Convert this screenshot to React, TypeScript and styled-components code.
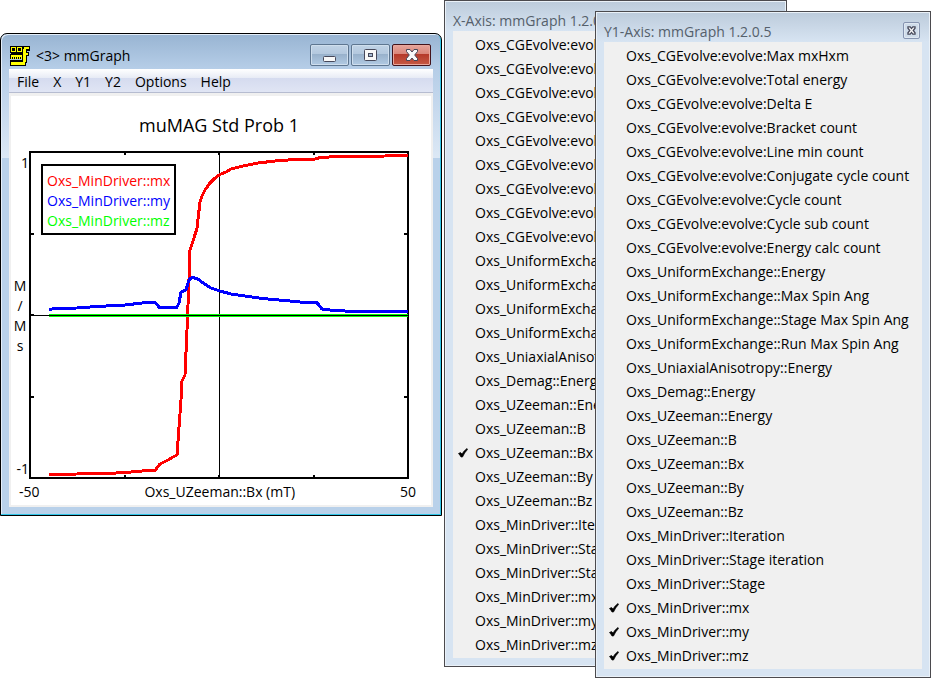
import React from "react";
import styled, { createGlobalStyle } from "styled-components";

const GlobalStyle = createGlobalStyle`
  * { box-sizing: border-box; }
  body {
    margin: 0;
    background: #ffffff;
    color: #000000;
    font: 14px/20px "Open Sans", "Noto Sans", sans-serif;
  }
  button { font: inherit; color: inherit; }
`;

const Desktop = styled.main`
  position: relative;
  min-height: 100vh;
  overflow: hidden;
`;

/* ---------- Graph window ---------- */

const GraphWindow = styled.section`
  position: absolute;
  left: 0;
  top: 33px;
  width: min(442px, 100vw);
  padding: 2px 8px 8px;
  border: 1px solid #000000;
  border-radius: 7px 7px 0 0;
  background:
    linear-gradient(#98b4d2 0, #b5cde7 34px, #dce8f5 124px) 0 0 / 100% 124px no-repeat,
    #b9d1ea;
  box-shadow: inset -1px -1px 0 #2fc6e8, inset 1px 1px 0 #e4eef9;
`;

const GraphTitleBar = styled.header`
  display: flex;
  align-items: center;
  height: 33px;
  gap: 5px;
  padding: 0 2px 0 1px;
`;

const TitleIcon = styled.svg`
  flex: none;
  align-self: flex-end;
  margin-bottom: 2px;
`;

const GraphTitle = styled.h1`
  flex: 1;
  margin: 0;
  padding-top: 6px;
  font-size: 14px;
  font-weight: 400;
`;

const CaptionButtons = styled.div`
  display: flex;
  align-self: flex-end;
  gap: 2px;
  padding-bottom: 3px;
`;

const CaptionButton = styled.button<{ $danger?: boolean }>`
  display: grid;
  place-items: center;
  width: 39px;
  height: 22px;
  padding: 0;
  border: 1px solid ${(p) => (p.$danger ? "#43141c" : "#5e7690")};
  border-radius: 2px;
  background: ${(p) =>
    p.$danger
      ? "linear-gradient(#e7a59c 0, #d98579 45%, #b5392a 46%, #c65a45 100%)"
      : "linear-gradient(#c1d3e6 0, #b3c8de 45%, #98b1cb 46%, #b1cae3 100%)"};
  box-shadow: inset 0 0 0 1px ${(p) => (p.$danger ? "#e9a79c" : "#cfdeed")};
`;

const MenuBar = styled.nav`
  display: flex;
  height: 24px;
  padding-left: 1px;
  border-bottom: 1px solid #b6bcd0;
  background: linear-gradient(#ffffff 0, #e7ebf5 9px, #d5dbef 9px, #e0e5f4 100%);
`;

const MenuButton = styled.button`
  padding: 3px 7px 0;
  border: 0;
  background: none;
`;

const Client = styled.div`
  border: 2px solid #f0f0f0;
  border-top-width: 3px;
  background: #ffffff;
`;

const ChartGrid = styled.figure`
  display: grid;
  grid-template-columns: 18px 1fr 22px;
  grid-template-rows: 55px auto 26px;
  margin: 0;
`;

const ChartTitle = styled.figcaption`
  grid-column: 2;
  padding-top: 17px;
  font-size: 18px;
  line-height: 24px;
  text-align: center;
`;

const YAxis = styled.div`
  grid-column: 1;
  display: flex;
  flex-direction: column;
  justify-content: space-between;
  padding-top: 2px;
  text-align: right;
`;

const YTitle = styled.div`
  display: flex;
  flex-direction: column;
  align-items: center;
`;

const PlotArea = styled.div`
  position: relative;
`;

const Plot = styled.svg`
  display: block;
  width: 100%;
  height: auto;
`;

const Legend = styled.ul`
  position: absolute;
  left: 12px;
  top: 13px;
  margin: 0;
  padding: 5px 4px 2px;
  border: 2px solid #000000;
  background: #ffffff;
  list-style: none;
`;

const LegendItem = styled.li<{ $color: string }>`
  color: ${(p) => p.$color};
`;

const XAxis = styled.div`
  grid-column: 1 / -1;
  display: flex;
  justify-content: space-between;
  padding: 3px 15px 0 8px;
`;

const RED = "#ff0000";
const BLUE = "#0000ff";
const GREEN = "#00ff00";

const series = [
  {
    name: "Oxs_MinDriver::mx",
    color: RED,
    points:
      "49,474.5 77,474 108,473.5 125,472.5 142,471 155,470.5 160,464 168,460 173,457 177,455 181,400 181.5,382 185,375 187,330 189,280 190,250 194,238 197,228 200,202 202,196 205,190 210,183 215,178 220,174.5 226,172 231,169 243,166 258,163 275,161 295,159.5 315,159 320,157.5 338,156.5 385,156 408,155.5",
  },
  {
    name: "Oxs_MinDriver::my",
    color: BLUE,
    points:
      "49,309.5 55,308.5 77,308 97,306.5 125,305 142,303 155,302.5 159,307 177,307 179,303 181,292 186,290 188,283 190,278.5 193,277.5 198,279 203,283 211,288 220,291 231,294 245,296 262,298.5 285,300.5 300,302 316,302 319,305 322,309 330,310 345,311 357,311.5 408,312",
  },
  { name: "Oxs_MinDriver::mz", color: GREEN, points: "49,315.5 408,315.5" },
];

const xTicks = [125, 219, 314];
const yTicks = [234, 315, 397];

function PlotDrawing() {
  return (
    <Plot viewBox="29 151 380 328" role="img" aria-label="M/Ms against Oxs_UZeeman::Bx">
      <g shapeRendering="crispEdges" stroke="#000000" fill="none">
        <rect x="30" y="152" width="378" height="326" strokeWidth="2" />
        {xTicks.map((x) => (
          <path key={x} d={`M${x} 153v2M${x} 477v-2`} strokeWidth="2" />
        ))}
        {yTicks.map((y) => (
          <path key={y} d={`M31 ${y}h3M407 ${y}h-3`} strokeWidth="2" />
        ))}
        <path d="M219.5 152V478" />
      </g>
      <g fill="none" strokeWidth="3" shapeRendering="crispEdges">
        {series.map((s) => (
          <polyline key={s.name} points={s.points} stroke={s.color} />
        ))}
      </g>
      <path d="M30 315.5H408" stroke="#000000" shapeRendering="crispEdges" />
    </Plot>
  );
}

function AppIcon() {
  return (
    <TitleIcon width="21" height="21" viewBox="0 0 21 21" shapeRendering="crispEdges" aria-hidden="true">
      <path fill="#000000" d="M0 0H20V5H17V6H19V10H17V17H16V20H0V14H12V13H0V8H1V7H0z" />
      <path
        fill="#ffff00"
        fillRule="evenodd"
        d="M1 1h5v5H1zM2 2v3h3V2zM7 1h5v5H7zM8 2v3h3V2zM1 9h11v4h-1v-2h-1v2H9v-2H8v2H7v-2H6v2H5v-2H4v2H3v-2H2v2H1zM1 16h12V3h1V1h5v2h-3v4h2v2h-2v7h-1v3H1z"
      />
    </TitleIcon>
  );
}

function CloseGlyph({ size, stroke }: { size: number; stroke: number }) {
  return (
    <svg width={size} height={size} viewBox="0 0 14 14" aria-hidden="true">
      <path
        d="M1.500 1.500h3.500L7 4l2-2.500h3.500v2L9.700 7l2.800 3.500v2H9L7 10l-2 2.500H1.500v-2L4.300 7 1.500 3.500z"
        fill="#f8f8f8"
        stroke="#46485a"
        strokeWidth={stroke}
      />
    </svg>
  );
}

/* ---------- Axis palettes ---------- */

const Palette = styled.section<{ $left: number; $top: number; $width: number }>`
  position: absolute;
  left: ${(p) => p.$left}px;
  top: ${(p) => p.$top}px;
  min-width: ${(p) => p.$width}px;
  padding: 0 8px 8px;
  border: 1px solid #4b4a4e;
  background: linear-gradient(#bccbdb 0, #d7e4f2 30px);
  box-shadow: inset 0 0 0 1px #eaf1f8;
`;

const PaletteTitleBar = styled.header`
  display: flex;
  align-items: center;
  justify-content: space-between;
  height: 30px;
  padding: 6px 2px 0 0;
`;

const PaletteTitle = styled.h2`
  margin: 0;
  padding-top: 3px;
  color: #55606b;
  font-size: 14px;
  font-weight: 400;
`;

const PaletteClose = styled.button`
  display: grid;
  place-items: center;
  width: 17px;
  height: 17px;
  padding: 0;
  border: 1px solid #8694b0;
  border-radius: 2px;
  background: #cfdcea;
  box-shadow: inset 0 0 0 1px #dfe8f2;
`;

const OptionList = styled.ul`
  margin: 0;
  padding: 2px 0 1px;
  background: #f0f0f0;
  list-style: none;
`;

const Option = styled.label`
  display: flex;
  align-items: center;
  height: 24px;
  padding: 0 9px 0 5px;
  gap: 7px;
  white-space: nowrap;
`;

const CheckMark = styled.span`
  display: grid;
  width: 10px;
  height: 10px;
`;

const CheckInput = styled.input`
  appearance: none;
  grid-area: 1 / 1;
  margin: 0;

  &:not(:checked) + svg {
    visibility: hidden;
  }
`;

const CheckGlyph = styled.svg`
  grid-area: 1 / 1;
  pointer-events: none;
`;

const quantities = [
  "Oxs_CGEvolve:evolve:Max mxHxm",
  "Oxs_CGEvolve:evolve:Total energy",
  "Oxs_CGEvolve:evolve:Delta E",
  "Oxs_CGEvolve:evolve:Bracket count",
  "Oxs_CGEvolve:evolve:Line min count",
  "Oxs_CGEvolve:evolve:Conjugate cycle count",
  "Oxs_CGEvolve:evolve:Cycle count",
  "Oxs_CGEvolve:evolve:Cycle sub count",
  "Oxs_CGEvolve:evolve:Energy calc count",
  "Oxs_UniformExchange::Energy",
  "Oxs_UniformExchange::Max Spin Ang",
  "Oxs_UniformExchange::Stage Max Spin Ang",
  "Oxs_UniformExchange::Run Max Spin Ang",
  "Oxs_UniaxialAnisotropy::Energy",
  "Oxs_Demag::Energy",
  "Oxs_UZeeman::Energy",
  "Oxs_UZeeman::B",
  "Oxs_UZeeman::Bx",
  "Oxs_UZeeman::By",
  "Oxs_UZeeman::Bz",
  "Oxs_MinDriver::Iteration",
  "Oxs_MinDriver::Stage iteration",
  "Oxs_MinDriver::Stage",
  "Oxs_MinDriver::mx",
  "Oxs_MinDriver::my",
  "Oxs_MinDriver::mz",
];

type AxisPaletteProps = {
  title: string;
  type: "radio" | "checkbox";
  selected: string[];
  left: number;
  top: number;
  width: number;
};

function AxisPalette({ title, type, selected, left, top, width }: AxisPaletteProps) {
  return (
    <Palette $left={left} $top={top} $width={width} aria-label={title}>
      <PaletteTitleBar>
        <PaletteTitle>{title}</PaletteTitle>
        <PaletteClose aria-label="Close">
          <CloseGlyph size={9} stroke={2} />
        </PaletteClose>
      </PaletteTitleBar>
      <OptionList>
        {quantities.map((q) => (
          <li key={q}>
            <Option>
              <CheckMark>
                <CheckInput type={type} name={title} defaultChecked={selected.includes(q)} />
                <CheckGlyph width="10" height="10" viewBox="0 0 10 10">
                  <path
                    d="M0.500 5.500L2.500 4.500L4 6Q6 2.500 9 0.500L9.500 1.500Q6.500 4.500 4.500 9H3Q2 7 0.500 5.500z"
                    fill="#000000"
                    stroke="#000000"
                    strokeWidth="0.700"
                  />
                </CheckGlyph>
              </CheckMark>
              {q}
            </Option>
          </li>
        ))}
      </OptionList>
    </Palette>
  );
}

export default function App() {
  return (
    <>
      <GlobalStyle />
      <Desktop>
        <GraphWindow>
          <GraphTitleBar>
            <AppIcon />
            <GraphTitle>&lt;3&gt; mmGraph</GraphTitle>
            <CaptionButtons>
              <CaptionButton aria-label="Minimize">
                <svg width="15" height="16" viewBox="0 0 15 16" aria-hidden="true">
                  <rect x="1.500" y="9.500" width="12" height="5" rx="1" fill="#f8f8f8" stroke="#46485a" />
                </svg>
              </CaptionButton>
              <CaptionButton aria-label="Maximize">
                <svg width="13" height="12" viewBox="0 0 13 12" aria-hidden="true">
                  <rect x="0.500" y="0.500" width="12" height="11" rx="1" fill="#f8f8f8" stroke="#46485a" />
                  <rect x="4.500" y="4.500" width="4" height="3" fill="#a4b9d2" stroke="#46485a" />
                </svg>
              </CaptionButton>
              <CaptionButton $danger aria-label="Close">
                <CloseGlyph size={14} stroke={1} />
              </CaptionButton>
            </CaptionButtons>
          </GraphTitleBar>
          <MenuBar>
            {["File", "X", "Y1", "Y2", "Options", "Help"].map((m) => (
              <MenuButton key={m}>{m}</MenuButton>
            ))}
          </MenuBar>
          <Client>
            <ChartGrid>
              <ChartTitle>muMAG Std Prob 1</ChartTitle>
              <YAxis>
                <span>1</span>
                <YTitle>
                  {["M", "/", "M", "s"].map((c, i) => (
                    <span key={i}>{c}</span>
                  ))}
                </YTitle>
                <span>-1</span>
              </YAxis>
              <PlotArea>
                <PlotDrawing />
                <Legend>
                  {series.map((s) => (
                    <LegendItem key={s.name} $color={s.color}>
                      {s.name}
                    </LegendItem>
                  ))}
                </Legend>
              </PlotArea>
              <XAxis>
                <span>-50</span>
                <span>Oxs_UZeeman::Bx (mT)</span>
                <span>50</span>
              </XAxis>
            </ChartGrid>
          </Client>
        </GraphWindow>
        <AxisPalette
          title="X-Axis: mmGraph 1.2.0.5"
          type="radio"
          selected={["Oxs_UZeeman::Bx"]}
          left={444}
          top={0}
          width={343}
        />
        <AxisPalette
          title="Y1-Axis: mmGraph 1.2.0.5"
          type="checkbox"
          selected={["Oxs_MinDriver::mx", "Oxs_MinDriver::my", "Oxs_MinDriver::mz"]}
          left={595}
          top={11}
          width={336}
        />
      </Desktop>
    </>
  );
}
